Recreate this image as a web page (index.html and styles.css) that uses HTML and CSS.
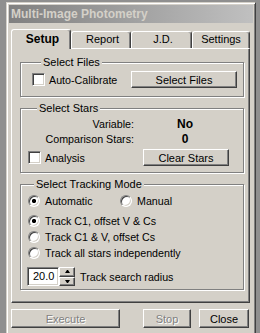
FILE: index.html
```html
<!DOCTYPE html>
<html lang="en">
	<head>
		<meta charset="utf-8">
		<title>Multi-Image Photometry</title>
		<link rel="stylesheet" href="styles.css">
	</head>
	<body>
		<div class="window">
			<div class="titlebar">Multi-Image Photometry</div>
			<div class="client">
				<div class="tabs">
					<div class="tab active tab-setup">Setup</div>
					<div class="tab tab-report">Report</div>
					<div class="tab tab-jd">J.D.</div>
					<div class="tab tab-settings">Settings</div>
				</div>
				<div class="panel">
					<div class="group group-files">
						<span class="legend">Select Files</span>
						<div class="row">
							<label class="check"><span class="box"></span>Auto-Calibrate</label>
							<button class="btn btn-files">Select Files</button>
						</div>
					</div>
					<div class="group group-stars">
						<span class="legend">Select Stars</span>
						<div class="info">
							<span class="info-label">Variable:</span>
							<span class="info-value">No</span>
							<span class="info-label">Comparison Stars:</span>
							<span class="info-value">0</span>
						</div>
						<div class="row">
							<label class="check"><span class="box"></span>Analysis</label>
							<button class="btn btn-clear">Clear Stars</button>
						</div>
					</div>
					<div class="group group-track">
						<span class="legend">Select Tracking Mode</span>
						<div class="radio-row">
							<label class="radio radio-auto"><span class="dot checked"></span>Automatic</label>
							<label class="radio"><span class="dot"></span>Manual</label>
						</div>
						<div class="radio-list">
							<label class="radio"><span class="dot checked"></span>Track C1, offset V &amp; Cs</label>
							<label class="radio"><span class="dot"></span>Track C1 &amp; V, offset Cs</label>
							<label class="radio"><span class="dot"></span>Track all stars independently</label>
						</div>
						<div class="spin-row">
							<span class="spin-input">20.0</span>
							<span class="spin-buttons">
								<span class="spin-btn up"></span>
								<span class="spin-btn down"></span>
							</span>
							<span class="spin-label">Track search radius</span>
						</div>
					</div>
				</div>
				<div class="actions">
					<button class="btn btn-execute" disabled>Execute</button>
					<button class="btn btn-stop" disabled>Stop</button>
					<button class="btn btn-close">Close</button>
				</div>
			</div>
		</div>
	</body>
</html>
```

FILE: styles.css
```css
:root {
	--face: #d4d0c8;
	--light: #fff;
	--shadow: #808080;
	--dark: #404040;
}
body {
	margin: 0;
	background: #8f8f8f;
	font-family: "Liberation Sans", Arial, sans-serif;
	font-size: 10.7px;
	color: #000;
	overflow: hidden;
}
.window {
	margin: 2px 0 0 6px;
	width: 250px;
	height: 340px;
	box-sizing: border-box;
	padding: 2px;
	background: var(--face);
	border: 1px solid;
	border-color: var(--face) var(--dark) var(--dark) var(--face);
	box-shadow: inset 1px 1px var(--light), inset -1px -1px var(--shadow);
}
.titlebar {
	height: 18px;
	line-height: 18px;
	padding-left: 2px;
	background: linear-gradient(to right, #808080, #c0c0c0);
	color: var(--face);
	font-weight: bold;
	font-size: 12px;
}
.client {
	padding: 6px 3px 0 2px;
}

/* tabs */
.tabs {
	display: flex;
	align-items: flex-end;
	height: 19px;
}
.tab {
	box-sizing: border-box;
	height: 17px;
	line-height: 15px;
	padding-left: 3px;
	text-align: center;
	font-size: 11px;
	border: 1px solid;
	border-bottom: none;
	border-color: var(--light) var(--dark) var(--dark) var(--light);
	border-radius: 3px 3px 0 0;
	box-shadow: inset -1px 0 var(--shadow);
}
.tab.active {
	position: relative;
	z-index: 1;
	height: 20px;
	margin-bottom: -1px;
	line-height: 19px;
	font-weight: bold;
	font-size: 12px;
	background: var(--face);
}
.tab-setup { width: 60px; }
.tab-report { width: 60px; }
.tab-jd { width: 61px; }
.tab-settings { width: 58px; padding-left: 0; }

.panel {
	width: 239px;
	height: 255px;
	box-sizing: border-box;
	padding: 13px 4px 0 8px;
	border: 1px solid;
	border-color: var(--light) var(--dark) var(--dark) var(--light);
	box-shadow: inset -1px -1px var(--shadow);
}

/* group boxes */
.group {
	display: flex;
	flex-direction: column;
	box-sizing: border-box;
	width: 224px;
	border: 1px solid var(--shadow);
	box-shadow: inset 1px 1px var(--light), 1px 1px var(--light);
}
.legend {
	align-self: flex-start;
	margin: -7px 0 0 9px;
	padding: 0 2px;
	line-height: 13px;
	font-size: 11px;
	background: var(--face);
}
.group-files {
	height: 35px;
	padding: 0 6px 0 11px;
}
.group-stars {
	height: 65px;
	margin-top: 11px;
	padding: 0 6px 0 7px;
}
.group-track {
	height: 106px;
	margin-top: 11px;
	padding: 0 6px 0 7px;
}
.group-track .legend {
	margin-left: 6px;
}
.row {
	display: flex;
	align-items: center;
	height: 17px;
	margin-top: 2px;
}
.check {
	display: flex;
	align-items: center;
	gap: 4px;
}
.box {
	width: 13px;
	height: 13px;
	box-sizing: border-box;
	background: #fff;
	border: 1px solid;
	border-color: var(--shadow) var(--light) var(--light) var(--shadow);
	box-shadow: inset 1px 1px var(--dark), inset -1px -1px var(--face);
}

/* buttons */
.btn {
	box-sizing: border-box;
	height: 17px;
	padding: 0;
	font-family: inherit;
	font-size: 11px;
	color: #000;
	background: var(--face);
	border: 1px solid;
	border-color: var(--light) var(--dark) var(--dark) var(--light);
	box-shadow: inset -1px -1px var(--shadow);
}
.btn:disabled {
	color: var(--shadow);
	text-shadow: 1px 1px var(--light);
}
.btn-files {
	width: 106px;
	margin-left: auto;
}
.btn-clear {
	width: 86px;
	margin: 0 8px 0 auto;
}

/* star info */
.info {
	display: grid;
	grid-template-columns: 106px 102px;
	grid-auto-rows: 15px;
	margin-top: 2px;
	line-height: 15px;
}
.info-label {
	text-align: right;
}
.info-value {
	text-align: center;
	font-weight: bold;
	font-size: 12px;
}

/* radios */
.radio {
	display: flex;
	align-items: center;
	gap: 5px;
	height: 16px;
}
.dot {
	width: 12px;
	height: 12px;
	box-sizing: border-box;
	border-radius: 50%;
	background: #fff;
	border: 1px solid;
	border-color: var(--shadow) var(--light) var(--light) var(--shadow);
	box-shadow: inset 1px 1px var(--dark), inset -1px -1px var(--face);
}
.dot.checked {
	background: radial-gradient(circle, #000 0, #000 1.8px, #fff 2.4px);
}
.radio-row {
	display: flex;
	margin-top: 2px;
}
.radio-auto {
	width: 92px;
}
.radio-list {
	margin-top: 4px;
}

/* spin box */
.spin-row {
	display: flex;
	align-items: center;
	margin-top: 6px;
	margin-left: -1px;
}
.spin-input {
	box-sizing: border-box;
	width: 32px;
	height: 19px;
	line-height: 17px;
	padding-left: 5px;
	font-size: 11px;
	background: #fff;
	border: 1px solid;
	border-color: var(--shadow) var(--light) var(--light) var(--shadow);
	box-shadow: inset 1px 1px var(--dark), inset -1px -1px var(--face);
}
.spin-buttons {
	display: flex;
	flex-direction: column;
	width: 16px;
	height: 19px;
}
.spin-btn {
	flex: 1;
	display: flex;
	align-items: center;
	justify-content: center;
	box-sizing: border-box;
	border: 1px solid;
	border-color: var(--light) var(--dark) var(--dark) var(--light);
	box-shadow: inset -1px -1px var(--shadow);
}
.spin-btn::after {
	content: "";
	width: 1px;
	border-left: 2px solid transparent;
	border-right: 2px solid transparent;
}
.spin-btn.up::after {
	border-bottom: 3px solid #000;
}
.spin-btn.down::after {
	border-top: 3px solid #000;
}
.spin-label {
	margin-left: 5px;
}

/* bottom buttons */
.actions {
	display: flex;
	margin-top: 6px;
}
.actions .btn {
	height: 19px;
}
.btn-execute {
	width: 109px;
}
.btn-stop {
	width: 48px;
	margin-left: 23px;
}
.btn-close {
	width: 50px;
	margin-left: 8px;
}
```
